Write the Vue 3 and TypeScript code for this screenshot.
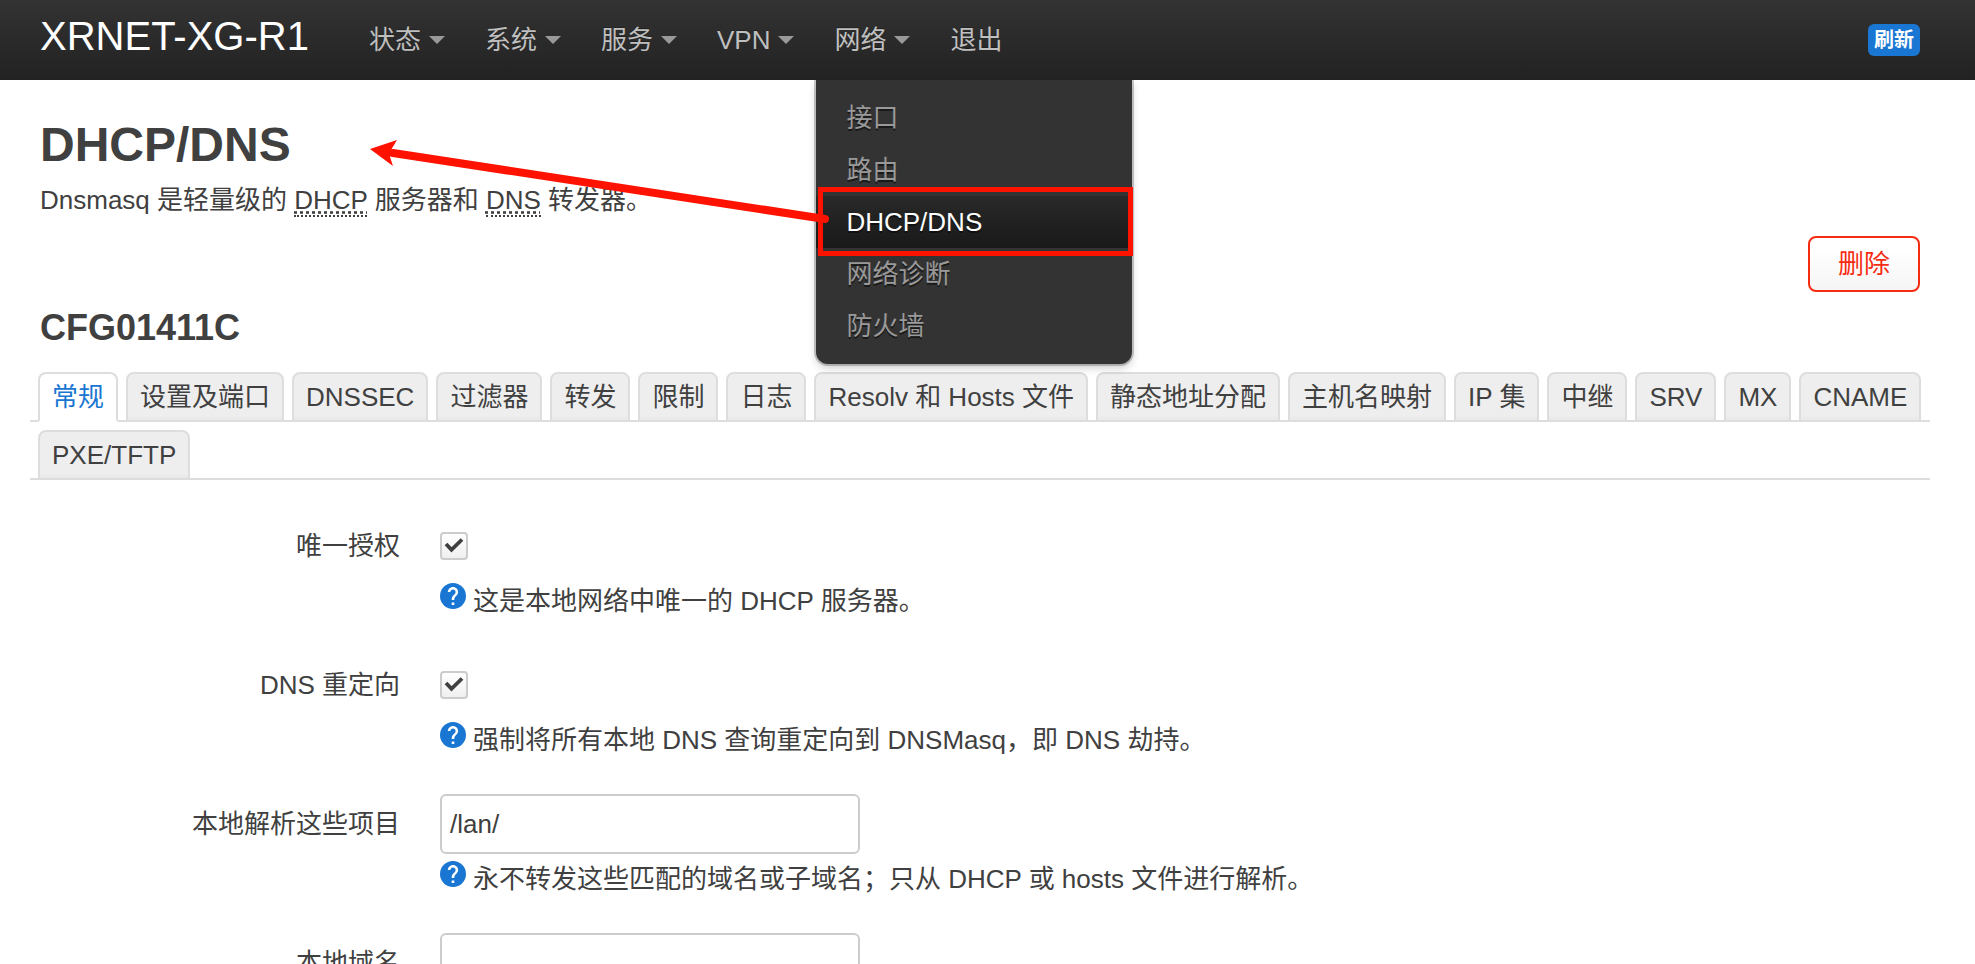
<script setup lang="ts">
import { ref } from 'vue'

interface NavItem {
  label: string
  children?: string[]
  open?: boolean
}

interface Field {
  id: string
  label: string
  kind: 'check' | 'text'
  help?: string
}

const nav: NavItem[] = [
  { label: '状态', children: [] },
  { label: '系统', children: [] },
  { label: '服务', children: [] },
  { label: 'VPN', children: [] },
  { label: '网络', children: ['接口', '路由', 'DHCP/DNS', '网络诊断', '防火墙'], open: true },
  { label: '退出' },
]
const currentPage = 'DHCP/DNS'

const tabs: string[] = [
  '常规', '设置及端口', 'DNSSEC', '过滤器', '转发', '限制', '日志', 'Resolv 和 Hosts 文件',
  '静态地址分配', '主机名映射', 'IP 集', '中继', 'SRV', 'MX', 'CNAME', 'PXE/TFTP',
]
const activeTab = ref('常规')

const fields: Field[] = [
  { id: 'authoritative', label: '唯一授权', kind: 'check', help: '这是本地网络中唯一的 DHCP 服务器。' },
  { id: 'redirect', label: 'DNS 重定向', kind: 'check', help: '强制将所有本地 DNS 查询重定向到 DNSMasq，即 DNS 劫持。' },
  { id: 'local', label: '本地解析这些项目', kind: 'text', help: '永不转发这些匹配的域名或子域名；只从 DHCP 或 hosts 文件进行解析。' },
  { id: 'domain', label: '本地域名', kind: 'text' },
]
const checks = ref<Record<string, boolean>>({ authoritative: true, redirect: true })
const texts = ref<Record<string, string>>({ local: '/lan/', domain: '' })
</script>

<template>
  <header class="topbar">
    <a class="brand" href="#">XRNET-XG-R1</a>
    <nav>
      <ul class="nav">
        <li v-for="item in nav" :key="item.label" class="nav-item">
          <a class="nav-link" href="#">{{ item.label }}<span v-if="item.children" class="caret"></span></a>
          <div v-if="item.open" class="dropdown">
            <ul class="menu">
              <li v-for="child in item.children" :key="child" class="menu-item">
                <a class="menu-link" :class="{ current: child === currentPage }" href="#">{{ child }}</a>
                <span v-if="child === currentPage" class="mark"></span>
              </li>
            </ul>
            <svg class="arrow" width="464" height="90" viewBox="0 0 464 90" aria-hidden="true">
              <path d="M25 13 L457 79" stroke="#ff1200" stroke-width="8" stroke-linecap="round" />
              <path d="M2 9 L29 0 L23 10 L22 17 L25 26 Z" fill="#ff1200" />
            </svg>
          </div>
        </li>
      </ul>
    </nav>
    <button class="badge" type="button">刷新</button>
  </header>

  <main class="page">
    <h1>DHCP/DNS</h1>
    <p class="intro">Dnsmasq 是轻量级的 <abbr>DHCP</abbr> 服务器和 <abbr>DNS</abbr> 转发器。</p>
    <div class="actions"><button class="remove" type="button">删除</button></div>
    <h2>CFG01411C</h2>

    <div class="tabs" role="tablist">
      <button
        v-for="tab in tabs"
        :key="tab"
        class="tab"
        :class="{ active: tab === activeTab }"
        type="button"
        role="tab"
        :aria-selected="tab === activeTab"
        @click="activeTab = tab"
      >{{ tab }}</button>
    </div>

    <form class="form" @submit.prevent>
      <div v-for="field in fields" :key="field.id" class="row">
        <label class="label" :for="field.id">{{ field.label }}</label>
        <div class="field">
          <div class="control">
            <span v-if="field.kind === 'check'" class="check">
              <input :id="field.id" v-model="checks[field.id]" type="checkbox" />
              <svg v-if="checks[field.id]" class="tick" viewBox="0 0 28 28" aria-hidden="true">
                <path d="M6 12 L11.5 17.8 L22 7.5" fill="none" stroke="#404040" stroke-width="3.8" />
              </svg>
            </span>
            <input v-else :id="field.id" v-model="texts[field.id]" class="text" type="text" />
          </div>
          <p v-if="field.help" class="help">
            <svg class="help-icon" viewBox="2 2 20 20" aria-hidden="true">
              <circle cx="12" cy="12" r="10" fill="#1976d2" />
              <path
                d="M13 19h-2v-2h2v2zm2.07-7.75l-.9.92C13.45 12.9 13 13.5 13 15h-2v-.5c0-1.1.45-2.1 1.17-2.83l1.24-1.26c.37-.36.59-.86.59-1.41 0-1.1-.9-2-2-2s-2 .9-2 2H8c0-2.21 1.79-4 4-4s4 1.79 4 4c0 .88-.36 1.68-.93 2.25z"
                fill="#fff"
              />
            </svg>
            <span>{{ field.help }}</span>
          </p>
        </div>
      </div>
    </form>
  </main>
</template>

<style>
body {
  margin: 0;
  background: #fff;
  color: #404040;
  font: 26px/36px "Liberation Sans", "Noto Sans CJK SC", sans-serif;
}
</style>

<style scoped>
ul,
p,
h1,
h2 {
  margin: 0;
  padding: 0;
  list-style: none;
}

a {
  text-decoration: none;
}

button,
input {
  box-sizing: border-box;
  margin: 0;
  font: inherit;
  color: inherit;
}

.topbar {
  display: flex;
  align-items: center;
  height: 80px;
  padding: 0 55px 0 40px;
  background: linear-gradient(#333, #222);
}

.brand {
  margin-right: 40px;
  padding-bottom: 8px;
  color: #fff;
  font-size: 40px;
  line-height: 40px;
}

.nav {
  display: flex;
}

.nav-item {
  position: relative;
}

.nav-link {
  display: flex;
  align-items: center;
  gap: 8px;
  height: 80px;
  box-sizing: border-box;
  padding: 0 20px;
  color: #bfbfbf;
  text-shadow: 0 -1px 0 rgba(0, 0, 0, 0.25);
}

.caret {
  border: 8px solid transparent;
  border-top-color: #999;
  border-bottom: 0;
}

.dropdown {
  position: absolute;
  top: 80px;
  left: 2px;
  z-index: 2;
  width: 316px;
}

.menu {
  padding: 12px 0;
  border-radius: 0 0 12px 12px;
  background: #333;
  box-shadow: 0 0 0 2px rgba(0, 0, 0, 0.2), 0 4px 8px rgba(0, 0, 0, 0.2);
  clip-path: inset(0 -16px -16px -16px);
}

.menu-item {
  position: relative;
}

.menu-link {
  display: block;
  padding: 8px 30px;
  color: #999;
  text-shadow: 0 2px 0 rgba(0, 0, 0, 0.5);
}

.menu-link.current {
  background: linear-gradient(#292929, #191919);
  color: #fff;
}

.mark {
  position: absolute;
  inset: -9px -1px -8px 2px;
  border: 5px solid #ff1200;
}

.arrow {
  position: absolute;
  top: 60px;
  left: -448px;
  pointer-events: none;
}

.badge {
  margin-left: auto;
  padding: 0 6px;
  border: 0;
  border-radius: 6px;
  background: #1976d2;
  color: #fff;
  font-size: 20px;
  font-weight: bold;
  line-height: 32px;
}

.page {
  padding: 29px 55px 36px 40px;
}

h1 {
  font-size: 48px;
  line-height: 72px;
}

abbr {
  border-bottom: 2px dotted #404040;
  text-decoration: underline dotted;
}

.intro {
  padding: 1px 0 2px;
}

.actions {
  display: flex;
  justify-content: flex-end;
  padding-top: 16px;
}

.remove {
  height: 56px;
  padding: 0 28px;
  border: 2px solid #f62b12;
  border-radius: 8px;
  background: linear-gradient(#fff 25%, #f5f5f5);
  color: #f62b12;
}

h2 {
  padding: 0 0 8px;
  font-size: 36px;
  line-height: 72px;
}

.tabs {
  display: flex;
  flex-wrap: wrap;
  gap: 8px;
  margin: 0 -10px;
  padding: 0 4px 0 8px;
  background: repeating-linear-gradient(transparent 0 48px, #ddd 48px 50px, transparent 50px 58px);
}

.tab {
  height: 50px;
  padding: 0 12px;
  border: 2px solid #ddd;
  border-radius: 8px 8px 0 0;
  background: linear-gradient(#eee 90%, #e8e8e8);
}

.tab.active {
  border-bottom-color: #fff;
  background: #fff;
  color: #1976d2;
}

.form {
  display: grid;
  gap: 36px;
  padding-top: 36px;
}

.row {
  display: grid;
  grid-template-columns: 360px 1fr;
  column-gap: 40px;
}

.label {
  line-height: 60px;
  text-align: right;
}

.control {
  display: flex;
  align-items: center;
  height: 60px;
}

.check {
  position: relative;
  display: flex;
}

.check input {
  width: 28px;
  height: 28px;
  appearance: none;
  border: 2px solid #ccc;
  border-radius: 4px;
  background: linear-gradient(#fff, #f0f0f0);
}

.tick {
  position: absolute;
  inset: 0;
  pointer-events: none;
}

.text {
  width: 420px;
  height: 60px;
  padding: 0 8px;
  border: 2px solid #ccc;
  border-radius: 6px;
  background: #fff;
}

.help {
  display: flex;
  align-items: flex-start;
  gap: 7px;
  padding-top: 7px;
}

.help-icon {
  flex: none;
  width: 26px;
  height: 26px;
}
</style>
